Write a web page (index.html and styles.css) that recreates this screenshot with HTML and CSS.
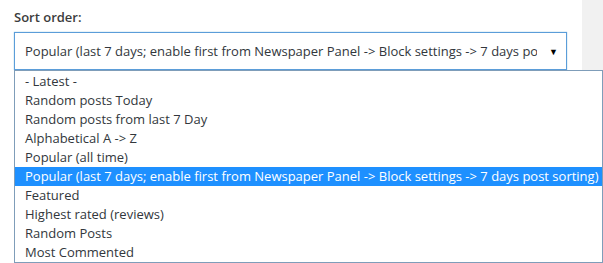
FILE: index.html
```html
<!DOCTYPE html>
<html>
<head>
<meta charset="utf-8">
<link rel="stylesheet" href="styles.css">
</head>
<body>
<div class="page">
  <div class="main">
    <div class="field">
      <div class="label">Sort order:</div>
      <div class="select">
        <span class="value">Popular (last 7 days; enable first from Newspaper Panel -&gt; Block settings -&gt; 7 days po</span>
        <span class="arrow">&#9660;</span>
      </div>
      <ul class="list">
        <li>- Latest -</li>
        <li>Random posts Today</li>
        <li>Random posts from last 7 Day</li>
        <li>Alphabetical A -&gt; Z</li>
        <li>Popular (all time)</li>
        <li class="sel">Popular (last 7 days; enable first from Newspaper Panel -&gt; Block settings -&gt; 7 days post sorting)</li>
        <li>Featured</li>
        <li>Highest rated (reviews)</li>
        <li>Random Posts</li>
        <li>Most Commented</li>
      </ul>
    </div>
  </div>
  <div class="side"></div>
</div>
</body>
</html>
```

FILE: styles.css
```css
html, body {
  margin: 0;
  padding: 0;
  background: #fff;
}
body {
  font-family: "Open Sans", "Liberation Sans", sans-serif;
  font-size: 13px;
  color: #444;
}
.page {
  display: flex;
  height: 263px;
  overflow: hidden;
}
.main {
  width: 582px;
  flex: none;
  padding: 8px 0 0 14px;
  box-sizing: border-box;
}
.side {
  flex: 1;
  background: #f1f1f1;
}
.field {
  position: relative;
}
.label {
  height: 18px;
  line-height: 18px;
  color: #3c3c3c;
  font-weight: 600;
  margin-bottom: 6px;
}
.select {
  width: 553px;
  height: 38px;
  box-sizing: border-box;
  border: 1px solid #5b9dd9;
  box-shadow: 0 0 1px rgba(30,140,190,.6);
  display: flex;
  align-items: center;
  padding: 0 8px 0 10px;
  background: #fff;
  color: #32373c;
}
.value {
  flex: 1;
  white-space: nowrap;
  overflow: hidden;
  margin-right: 12px;
}
.arrow {
  font-size: 9px;
  color: #000;
}
.list {
  position: absolute;
  left: 0;
  top: 62px;
  width: 589px;
  margin: 0;
  padding: 1px 0 0;
  list-style: none;
  box-sizing: border-box;
  border: 1px solid #7f9db9;
  background: #fff;
  color: #32373c;
}
.list li {
  height: 19px;
  line-height: 19px;
  padding-left: 10px;
  white-space: nowrap;
}
.list li.sel {
  background: #1e90ff;
  color: #fff;
}
```
